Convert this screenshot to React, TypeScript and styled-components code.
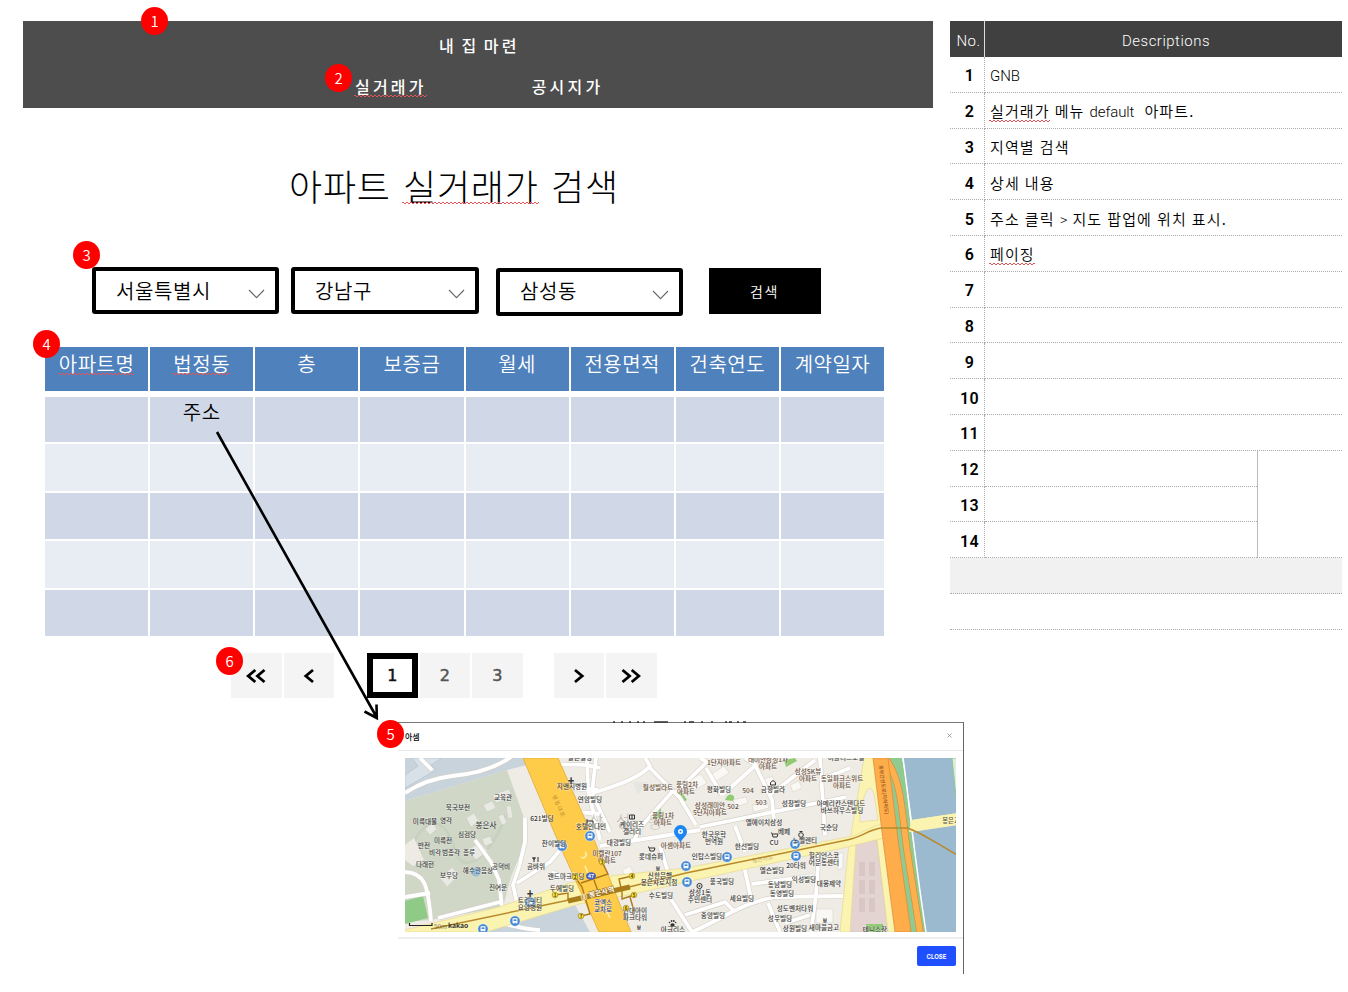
import React from "react";
import styled, { createGlobalStyle, css } from "styled-components";

const KR = `"Noto Sans CJK KR", sans-serif`;
const MIX = `Roboto, "Noto Sans CJK KR", sans-serif`;

const GlobalStyle = createGlobalStyle`
  * { box-sizing: border-box; }
  body { margin: 0; background: #fff; color: #000; font-family: ${KR}; font-weight: 300; }
`;

const Page = styled.div`
  position: relative;
  width: 1348px;
  height: 992px;
  overflow: hidden;
  display: flex;
  gap: 17px;
  padding: 21px 0 0 23px;
`;
const Main = styled.main`
  width: 910px;
  display: flex;
  flex-direction: column;
`;

const Badge = styled.span<{ $x: number; $y: number }>`
  position: absolute;
  left: ${(p) => p.$x}px;
  top: ${(p) => p.$y}px;
  width: 27px;
  height: 28px;
  border-radius: 50%;
  background: #fe0000;
  color: #fff;
  font: 350 15px/28px ${KR};
  letter-spacing: 0;
  text-align: center;
  z-index: 3;
`;

const Spell = styled.span<{ $drop?: number }>`
  position: relative;
  &::after {
    content: "";
    position: absolute;
    left: -1px;
    right: 0;
    bottom: ${(p) => p.$drop ?? 0}px;
    height: 2px;
    background:
      repeating-linear-gradient(90deg, #e0555a 0 2px, transparent 2px 4px) 0 0 / 100% 1px no-repeat,
      repeating-linear-gradient(90deg, transparent 0 2px, #e0555a 2px 4px) 0 1px / 100% 1px no-repeat;
  }
`;

const Header = styled.header`
  position: relative;
  height: 87px;
  background: #4d4d4d;
  color: #fff;
  font-size: 16px;
  font-weight: 500;
  letter-spacing: 3.2px;
`;
const Brand = styled.div`
  padding: 12px 0 0 416px;
  line-height: 24px;
  word-spacing: -2.3px;
`;
const Nav = styled.nav`
  display: flex;
  gap: 105px;
  padding: 17px 0 0 332px;
  line-height: 24px;
`;

const Title = styled.h1`
  margin: 52px 0 0 266px;
  font-size: 36px;
  font-weight: 300;
  line-height: 50px;
  letter-spacing: 0.8px;
  word-spacing: 3.5px;
  white-space: nowrap;
`;

const Filters = styled.div`
  position: relative;
  display: flex;
  align-items: flex-start;
  height: 49px;
  margin: 57px 0 0 69px;
`;
const SelectBox = styled.div<{ $w: number; $h: number; $ml?: number; $mt?: number }>`
  width: ${(p) => p.$w}px;
  height: ${(p) => p.$h}px;
  margin-left: ${(p) => p.$ml ?? 0}px;
  margin-top: ${(p) => p.$mt ?? 0}px;
  border: 4px solid #000;
  border-radius: 3px;
  display: flex;
  align-items: center;
  justify-content: space-between;
  padding: 0 10px ${(p) => (p.$mt ? 3 : 0)}px 20px;
  font-size: 20px;
  font-weight: 350;
  letter-spacing: 0.6px;
  svg { margin-top: ${(p) => (p.$mt ? 9 : 6)}px; }
`;
const SearchButton = styled.button`
  width: 112px;
  height: 46px;
  margin: 1px 0 0 26px;
  padding: 0 1px 0 0;
  border: 0;
  background: #000;
  color: #fff;
  font: 350 14px ${KR};
  letter-spacing: 1.6px;
`;

const Grid = styled.div`
  position: relative;
  width: 839px;
  margin: 31px 0 0 22px;
`;
const GridRow = styled.div<{ $kind: "head" | "odd" | "even"; $first?: boolean }>`
  display: grid;
  grid-template-columns: repeat(8, 1fr);
  gap: 2px;
  text-align: center;
  font-size: 20px;
  font-weight: 350;
  line-height: 30px;
  letter-spacing: 0.5px;
  margin-top: 2px;
  height: ${(p) => (p.$first ? 45 : 46.5)}px;
  > div { background: ${(p) => (p.$kind === "odd" ? "#d0d7e6" : "#e8edf4")}; }
  ${(p) =>
    p.$kind === "head" &&
    css`
      margin: 0 0 6px;
      height: 44px;
      line-height: 34px;
      color: #fff;
      > div { background: #4f81bc; }
    `}
`;

const Pager = styled.div`
  position: relative;
  display: flex;
  margin: 17px 0 0 208px;
`;
const PageButton = styled.div<{ $ml?: number; $current?: boolean }>`
  width: 50.5px;
  height: 45px;
  margin-left: ${(p) => p.$ml ?? 2}px;
  display: flex;
  align-items: center;
  justify-content: center;
  background: ${(p) => (p.$current ? "#fff" : "#f4f4f4")};
  border: ${(p) => (p.$current ? "6px solid #000" : "0")};
  color: ${(p) => (p.$current ? "#111" : "#555")};
  font: 400 16px "DejaVu Sans", sans-serif;
  -webkit-text-stroke: 0.5px currentColor;
`;

const Descriptions = styled.aside`
  width: 392px;
  display: grid;
  grid-template-columns: 35px 272px 1fr;
  grid-template-rows: 36px repeat(16, 35.8px);
  align-self: flex-start;
  font: 350 15px ${KR};
`;
const DescHead = styled.div<{ $wide?: boolean }>`
  background: #404040;
  color: #fff;
  display: flex;
  align-items: center;
  justify-content: center;
  padding-top: 4px;
  font: 300 15px ${MIX};
  letter-spacing: 0.5px;
  ${(p) => (p.$wide ? "grid-column: span 2; padding-left: 5px;" : "border-right: 1px solid #ddd; padding-left: 3px;")}
`;
const NumCell = styled.div`
  display: flex;
  align-items: center;
  justify-content: center;
  padding: 3px 0 0 5px;
  border-right: 1px dotted #aaa;
  border-bottom: 1px dotted #aaa;
  font: 600 16px ${MIX};
  letter-spacing: 0.3px;
`;
const TextCell = styled.div<{ $span: number }>`
  grid-column: span ${(p) => p.$span};
  display: flex;
  align-items: center;
  padding: 1px 0 0 5px;
  border-bottom: 1px dotted #aaa;
  white-space: pre;
  letter-spacing: 1.1px;
  word-spacing: 0.6px;
`;
const Latin = styled.span`
  font-family: Roboto, sans-serif;
  font-weight: 300;
  font-size: 15px;
  letter-spacing: -0.1px;
`;
const SideCell = styled.div`
  grid-column: 3;
  grid-row: 13 / span 3;
  border-left: 1px solid #bbb;
  border-bottom: 1px dotted #aaa;
`;
const FootRow = styled.div<{ $fill?: boolean }>`
  grid-column: 1 / -1;
  background: ${(p) => (p.$fill ? "#f1f1f1" : "#fff")};
  border-bottom: 1px dotted #aaa;
`;

const ArrowLayer = styled.svg`
  position: absolute;
  left: 200px;
  top: 420px;
  z-index: 2;
`;

const Popup = styled.section`
  position: absolute;
  left: 398px;
  top: 722px;
  width: 566px;
  height: 252px;
  background: #fff;
  border-top: 1px solid #777;
  border-right: 1.5px solid #666;
  display: flex;
  flex-direction: column;
`;
const EdgeMarks = styled.svg`
  position: absolute;
  left: 212px;
  top: -2px;
`;
const PopupHead = styled.div`
  height: 28px;
  padding: 0 11px 0 7px;
  display: flex;
  align-items: center;
  justify-content: space-between;
  border-bottom: 1px solid #e6e6e6;
  font-size: 8px;
  font-weight: 500;
  svg { margin-top: -2px; }
`;
const PopupBody = styled.div`
  height: 188px;
  padding: 7px 0 0 7px;
  border-bottom: 2px solid #eee;
  svg { display: block; }
`;
const PopupFoot = styled.div`
  flex: 1;
  display: flex;
  justify-content: flex-end;
  padding: 7px 7px 0 0;
`;
const CloseButton = styled.button`
  width: 39px;
  height: 20px;
  padding: 0;
  border: 0;
  border-radius: 2px;
  background: #1f4fff;
  color: #fff;
  font: 700 6px Inter, sans-serif;
`;

const Chevron = () => (
  <svg width="17" height="10" viewBox="0 0 17 10" fill="none" stroke="#666" strokeWidth="1.1">
    <path d="M1 1 8.5 8.6 16 1" />
  </svg>
);

const Angle = ({ double, right }: { double?: boolean; right?: boolean }) => (
  <svg width="22" height="16" viewBox="0 0 22 16" fill="none" stroke="#000" strokeWidth="2.8" transform={right ? "scale(-1 1)" : undefined}>
    {double ? <path d="M10.3 2 3.2 8l7.1 6M19.5 2l-7.1 6 7.1 6" /> : <path d="M15 2 7.8 8l7.2 6" />}
  </svg>
);

type Label = [string, number, number, string?, number?];
const brown = "#664d38";
const labels: Label[] = [
  ["지앤지병원", 572, 789], ["연암빌딩", 590, 802], ["교육관", 503, 800], ["북국보전", 458, 810],
  ["미륵대불", 425, 824], ["영각", 446, 823], ["봉은사", 486, 828, "#444", 7.6], ["심검당", 467, 837],
  ["621빌딩", 542, 821], ["미륵전", 443, 843], ["찬이빌딩", 554, 846], ["호텔인나인", 591, 829],
  ["케이리즈", 632, 827], ["갤러리", 632, 834], ["월성빌라트", 658, 790, brown], ["풍림2차", 687, 787, brown],
  ["아파트", 686, 794, brown], ["평화빌딩", 719, 792], ["504", 748, 793, brown], ["금향빌라", 773, 792],
  ["1단지아파트", 724, 765, brown], ["래미안삼성1차", 768, 762, brown], ["아파트", 768, 769, brown],
  ["삼성SK뷰", 808, 774, brown], ["아파트", 808, 781, brown], ["동일파크스위트", 842, 781, brown],
  ["아파트", 842, 788, brown], ["비즐리스포텔", 846, 760], ["알은빌딩", 580, 760], ["삼성래미안", 710, 808, brown],
  ["5단지아파트", 710, 815, brown], ["502", 733, 809, brown], ["503", 761, 805, brown], ["성창빌딩", 794, 806],
  ["아메리칸스탠다드", 841, 806], ["바쓰하우스빌딩", 842, 813], ["국순당", 829, 830], ["엘에이치삼성", 764, 825],
  ["풍림1차", 663, 818, brown], ["아파트", 663, 825, brown], ["아셈아파트", 676, 848, brown],
  ["한국문학", 714, 837], ["번역원", 714, 844], ["대광빌딩", 619, 845], ["베페", 784, 834], ["CU", 774, 845],
  ["노벨렌티", 805, 843], ["한선빌딩", 747, 849], ["인탑스빌딩", 707, 859], ["20타워", 796, 868],
  ["힐리언스코", 824, 858], ["어운동센터", 824, 865], ["엘슨빌딩", 772, 873], ["익성빌딩", 804, 882],
  ["동남빌딩", 780, 887], ["동영빌딩", 782, 896], ["대웅제약", 829, 886], ["풍국빌딩", 722, 884],
  ["삼성1동", 700, 895], ["주민센터", 700, 902], ["세요빌딩", 742, 901], ["중앙빌딩", 713, 918],
  ["성도벤처타워", 795, 911], ["성우빌딩", 780, 921], ["상원빌딩", 795, 931], ["새마을금고", 824, 930],
  ["테니스장", 875, 932], ["반전", 424, 848], ["비각", 435, 855], ["범종각", 451, 855], ["종루", 469, 855],
  ["다래헌", 425, 867], ["보우당", 449, 878], ["해수관음상", 478, 873], ["공덕비", 501, 869], ["진여문", 498, 890],
  ["곰바위", 536, 869], ["랜드마크빌딩", 566, 879], ["두에빌딩", 562, 891], ["트리니티", 530, 903], ["요양병원", 530, 910],
  ["미켈란107", 607, 856, brown], ["아파트", 607, 863, brown], ["코엑스", 603, 905, "#2c3f8c"], ["교차로", 603, 911.5, "#2c3f8c"],
  ["현대아이", 635, 913], ["파크타워", 635, 920], ["아크리스", 673, 932], ["수도빌딩", 661, 898], ["롯데슈퍼", 651, 859],
  ["신한은행", 660, 878], ["봉은사로지점", 659, 885], ["₩", 658, 871], ["₩", 639, 930],
  ["₩", 825, 923], ["✚", 571, 783], ["✚", 530, 896],
];
const busStops = [[590, 836], [562, 846], [795, 844], [796, 856], [727, 857], [686, 866], [687, 882], [530, 902], [515, 921], [483, 929]];
const exits: [number, number, string][] = [[602, 862, "3"], [575, 877, "2"], [555, 895, "1"], [632, 876, "4"], [634, 895, "5"], [626, 908, "6"], [581, 916, "7"]];

const WHITE_ROADS = [
  "M405 793C420 783 435 778 452 776C475 774 495 768 511 757",
  "M405 872C424 873 428 883 431 921",
  "M475 840 491 862 499 880 502 907M405 897 430 893M438 918 500 902",
  "M525 818V842L519 867 513 885 517 903M517 883 550 862 560 850",
  "M557 764C575 766 580 762 600 768M566 788 598 790M587 758 588 790 600 840M578 812 600 814",
  "M592 793C610 788 640 778 650 766L645 758M650 768 680 798 696 825M672 792 638 830M640 822 635 840",
  "M592 793 596 758M592 793 610 832M676 792 707 762 700 758M706 768 722 795M722 795 756 765 745 758M756 767 772 800 774 820",
  "M700 827 846 797M770 795 815 760M820 758 825 835M820 780 850 768",
  "M600 846 700 830M660 846 668 872M735 826 745 852",
  "M606 890 625 932M667 893 692 932M692 932C730 915 740 904 775 897L843 896M685 915 725 902 735 912",
  "M744 866 752 903M752 884 812 876M819 850 816 895 811 932M768 903 780 932M785 923 810 915",
  "M552 872 569 880M420 758 432 770M476 920C490 918 520 930 540 930",
];

const MapView = () => (
  <svg width="551" height="174" viewBox="405 758 551 174" fontFamily='"Noto Sans CJK KR", sans-serif'>
    <rect x="405" y="758" width="551" height="174" fill="#efece6" />
    <path d="M405 758H527V765L507 770 405 801Z" fill="#c8d3dc" />
    <path d="M405 775 418 766 412 758H442L431 765 436 770 405 788Z" fill="#d8e0e8" stroke="#b4c0cc" strokeWidth=".6" />
    <path d="M405 801 507 770 523 815 524 845 511 877 503 907 430 920 405 922Z" fill="#d0d7c7" />
    <path d="M410 850C425 815 445 815 455 850S500 840 505 815" fill="none" stroke="#c8d0bf" strokeWidth="3" />
    <path d="M405 901 423 896 428 918 405 924Z" fill="#8fcb87" />
    <path d="M486 932 575 905 590 932Z" fill="#c8d3dc" />
    <path d="M405 845 414 838 424 860 413 866 405 860Z" fill="#eeeae4" />
    <g fill="#e9e9e4" stroke="#c5c8bf" strokeWidth=".5">
      <path d="m466 818 8-5 5 8-8 6ZM483 805l9-4 4 7-9 4ZM493 795l16-6 3 8-16 6ZM440 878l12-11 7 8-12 12ZM468 850l12-8 8 9-12 9ZM506 806h5l2 12h-5ZM498 816l5-2 4 9-5 2ZM425 829l7-6 5 6-7 6ZM482 839l8-3 3 7-8 3Z" />
    </g>
    <path d="m633 782 15 0-10 13ZM690 775l12 6-8 10Z" fill="#e6e6e0" />
    <path d="M675 793 681 791 687 800 681 803ZM654 812 661 805V818H651ZM726 798C730 791 737 796 733 801L725 800ZM784 760 795 758 797 761 786 767Z" fill="#8fcb72" />
    <g fill="#faf8f5" stroke="#d2cdc5" strokeWidth=".5">
      <path d="m686 781 15-7 6 9-14 8ZM710 775l14-9 5 7-14 9ZM733 800l13-3 2 6-13 4ZM752 805l15-3 2 6-15 4ZM762 780l10-4 4 7-10 4ZM790 785l9-4 3 7-9 4ZM816 909h17v14h-17ZM837 855l6-3v16l-5 2ZM622 870l8-4 4 8-8 3Z" />
    </g>
    <g fill="none" strokeLinejoin="round">
      {WHITE_ROADS.map((d) => <path key={`c${d}`} d={d} stroke="#d5d0c8" strokeWidth="5" />)}
      {WHITE_ROADS.map((d) => <path key={d} d={d} stroke="#fff" strokeWidth="3.8" />)}
    </g>
    <path d="M853 843 877 840 888 932H847Z" fill="#e3d4d2" stroke="#ccb8b6" strokeWidth=".6" />
    <path d="M859 862h6v14h-6ZM869 862h6v14h-6ZM859 880h6v14h-6ZM869 880h6v14h-6ZM859 898h6v14h-6ZM869 898h6v14h-6Z" fill="#d9c7c6" />
    <rect x="866" y="924" width="17" height="9" fill="#8fcb72" />
    <g fill="#fbf3b0" stroke="#e6da94" strokeWidth=".7">
      <path d="M864 758H874L896 932H888L877 840 863 835 856 843 850 932H840L848 852 857 800Z" />
      <path d="M405 930 499 907 569 883 609 876 686 868 853 836 880 824 957 813V825L908 832 843 848 686 882 629 895 579 904 486 932H405Z" />
    </g>
    <path d="M867 790C862 800 859 815 860 822L878 820 874 794Q871 785 867 790Z" fill="#f1ede6" stroke="#e6da94" strokeWidth=".7" />
    <path d="M903 758H952L957 805V813L912 820Z" fill="#9bb9cf" />
    <path d="M912 832 957 825V932H926Z" fill="#9bb9cf" />
    <path d="M952 758 957 806V758Z" fill="#dfeedd" stroke="#8cc98e" />
    <path d="M886 758H902C907 785 909 810 912 835L926 932H909L897 846Z" fill="#91ca91" />
    <path d="M903 758C909 800 914 855 926 932" fill="none" stroke="#fff" strokeWidth="1.5" />
    <path d="M885 758C902 780 902 815 907 850L920 932" fill="none" stroke="#d88a35" strokeWidth="7" />
    <path d="M885 758C902 780 902 815 907 850L920 932" fill="none" stroke="#fdb04e" strokeWidth="5.8" />
    <path d="M873 758H888L898 840 911 932H895L883 840Z" fill="#ffad4a" stroke="#d88a35" strokeWidth=".7" />
    <path d="M911 820 957 813V825L909 832Z" fill="#fbf3b0" />
    <path d="M523 758H558L595 842 631 932H599L560 846Z" fill="#ffcc49" stroke="#dfaa35" strokeWidth=".8" />
    <path d="m585 866 5 13M601 899l9 19M585 852a3 3 0 0 1-4 5" fill="none" stroke="#fff0b0" strokeWidth="1.5" />
    <path d="M431 929 569 900 629 887 686 873 847 840C863 837 867 830 881 828H907C918 831 928 838 957 855" fill="none" stroke="#b8892b" strokeWidth="1.5" />
    <path d="m568 901 62-14" stroke="#a77c1b" strokeWidth="5" />
    <path d="M568 900V893L555 895M581 883 608 874 602 862M575 877 582 887 590 914 581 916M594 880 599 894M621 888 619 879 632 876M622 889V899L634 895M630 897 634 911" fill="none" stroke="#ae7a17" strokeWidth="1.4" />
    <g textAnchor="middle">
      <text x="596" y="827" fontSize="16" fill="#b0aba5" opacity=".8">삼</text>
      <text x="623" y="827" fontSize="16" fill="#b0aba5" opacity=".8">성</text>
      <text x="655" y="828" fontSize="16" fill="#b0aba5" opacity=".5">동</text>
      <text fontSize="5.5" fill="#94712d" transform="translate(557 807) rotate(66)" letterSpacing="1">영동대로</text>
      <text fontSize="5.8" fill="#a78c43" transform="translate(763 861) rotate(-11)">봉은사로</text>
      <text fontSize="5" fontWeight="500" fill="#8c501b" transform="translate(882 790) rotate(83)">동부간선도로(지하차도)</text>
      <text x="602" y="894.5" fontSize="7" fontWeight="700" fill="#fff" stroke="#8c6410" strokeWidth="1" paintOrder="stroke" transform="rotate(-13 602 894)">봉은사역</text>
      <text x="951" y="823" fontSize="6.3" fontWeight="500" fill="#555">봉은교</text>
    </g>
    <g fill="#4589d6" stroke="#fff" strokeWidth=".5">
      {busStops.map(([x, y]) => (
        <g key={`${x}-${y}`}>
          <circle cx={x} cy={y} r="5.2" />
          <path d={`M${x - 2.2} ${y - 2.5}h4.4v4.3h-4.4Z`} fill="#fff" />
          <path d={`M${x - 1.5} ${y - 1.6}h3v1.6h-3Z`} stroke="none" />
          <path d={`M${x - 1.7} ${y + 1.8}v1M${x + 1.7} ${y + 1.8}v1`} />
        </g>
      ))}
    </g>
    <g textAnchor="middle" fontWeight="500" stroke="#fff" strokeOpacity=".5" strokeWidth=".9" paintOrder="stroke">
      {labels.map(([t, x, y, c, s]) => (
        <text key={`${t}${x}${y}`} x={x} y={y} fill={c ?? "#383838"} fontSize={s ?? 6.6}>{t}</text>
      ))}
    </g>
    <g textAnchor="middle" fontSize="4.4" fontWeight="700">
      {exits.map(([x, y, n]) => (
        <g key={n}>
          <circle cx={x} cy={y} r="2.8" fill="#f9df38" stroke="#8f771d" strokeWidth=".6" />
          <text x={x} y={y + 1.6} fill="#443500">{n}</text>
        </g>
      ))}
      <ellipse cx="591" cy="876" rx="5" ry="3.8" fill="#4562b8" />
      <text x="591" y="878" fill="#fff" fontSize="5">47</text>
      <circle cx="584" cy="897" r="3" fill="#c49a2c" stroke="#fff" strokeWidth=".6" />
      <text x="584" y="898.6" fill="#fff">9</text>
    </g>
    <circle cx="476" cy="872" r="4.5" fill="#5b9ad5" opacity=".45" />
    <g fill="none" stroke="#333" strokeWidth="1">
      <circle cx="699.5" cy="886" r="2.6" /><circle cx="699.5" cy="886" r=".6" />
      <circle cx="801" cy="835" r="2.3" /><path d="M799.5 831.5h3" />
      <path d="M629.5 815h5v4h-5ZM632 815v4M587 819v4M587 821h6v2M648 847h1l1 4h4l1-3h-5M771 833h1l1 4h4l1-3h-5M534 857v5M538 857v5M533 857v2h2v-2M770.5 785v-2.5l2.5-2 2.5 2v2.5Z" />
    </g>
    <g fill="#333">
      <ellipse cx="672.5" cy="925" rx="2.2" ry="1.7" /><circle cx="669.5" cy="922.5" r=".8" /><circle cx="671.6" cy="921" r=".9" /><circle cx="673.8" cy="921" r=".9" /><circle cx="675.6" cy="922.5" r=".8" />
    </g>
    <path d="M680.5 843C679 838 674 836.5 674 831.5A6.5 6.5 0 0 1 687 831.5C687 836.5 682 838 680.5 843Z" fill="#1c86f2" />
    <circle cx="680.5" cy="831.5" r="2.5" fill="#fff" />
    <circle cx="680.5" cy="831.5" r="1" fill="#1c86f2" />
    <path d="M409.5 923v2.5H432V923" fill="none" stroke="#222" strokeWidth="1.2" />
    <text x="434" y="928.5" fontSize="6.5" fill="#333">50m</text>
    <text x="448" y="928" fontSize="6.8" fontWeight="700" fill="#333">kakao</text>
  </svg>
);

const columns = ["아파트명", "법정동", "층", "보증금", "월세", "전용면적", "건축연도", "계약일자"];
const notes: React.ReactNode[] = [
  <Latin>GNB</Latin>,
  <><Spell $drop={-1}>실거래가</Spell> 메뉴 <Latin>default</Latin>{"  "}아파트.</>,
  "지역별 검색",
  "상세 내용",
  <>주소 클릭 <Latin>&gt;</Latin> 지도 팝업에 위치 표시.</>,
  <Spell $drop={-1}>페이징</Spell>,
];

export default function App() {
  return (
    <Page>
      <GlobalStyle />
      <Main>
        <Header>
          <Badge $x={118} $y={-14}>1</Badge>
          <Badge $x={302} $y={43}>2</Badge>
          <Brand>내 집 마련</Brand>
          <Nav>
            <Spell $drop={1}>실거래가</Spell>
            <span>공시지가</span>
          </Nav>
        </Header>
        <Title>아파트 <Spell $drop={7}>실거래가</Spell> 검색</Title>
        <Filters>
          <Badge $x={-19} $y={-26}>3</Badge>
          <SelectBox $w={187} $h={47}>서울특별시<Chevron /></SelectBox>
          <SelectBox $w={188} $h={47} $ml={12}>강남구<Chevron /></SelectBox>
          <SelectBox $w={187} $h={48} $ml={17} $mt={1}>삼성동<Chevron /></SelectBox>
          <SearchButton>검색</SearchButton>
        </Filters>
        <Grid>
          <Badge $x={-12} $y={-17}>4</Badge>
          <GridRow $kind="head">
            {columns.map((c, i) => <div key={c}>{i < 2 ? <Spell $drop={3}>{c}</Spell> : c}</div>)}
          </GridRow>
          {[0, 1, 2, 3, 4].map((r) => (
            <GridRow key={r} $kind={r % 2 ? "even" : "odd"} $first={r === 0}>
              {columns.map((c, i) => <div key={c}>{r === 0 && i === 1 ? "주소" : null}</div>)}
            </GridRow>
          ))}
        </Grid>
        <Pager>
          <Badge $x={-15} $y={-6}>6</Badge>
          <PageButton $ml={0}><Angle double /></PageButton>
          <PageButton><Angle /></PageButton>
          <PageButton $ml={33} $current>1</PageButton>
          <PageButton>2</PageButton>
          <PageButton>3</PageButton>
          <PageButton $ml={31}><Angle right /></PageButton>
          <PageButton><Angle double right /></PageButton>
        </Pager>
      </Main>

      <Descriptions>
        <DescHead>No.</DescHead>
        <DescHead $wide>Descriptions</DescHead>
        {Array.from({ length: 14 }, (_, i) => (
          <React.Fragment key={i}>
            <NumCell>{i + 1}</NumCell>
            <TextCell $span={i < 11 ? 2 : 1}><span>{notes[i]}</span></TextCell>
          </React.Fragment>
        ))}
        <SideCell />
        <FootRow $fill />
        <FootRow />
      </Descriptions>

      <ArrowLayer width="200" height="310" viewBox="200 420 200 310" fill="none" stroke="#000" strokeWidth="2.6">
        <path d="M217 432 376.5 717M364.5 711.5 376.8 718 376.5 704.5" />
      </ArrowLayer>

      <Popup>
        <Badge $x={-21} $y={-3}>5</Badge>
        <EdgeMarks width="142" height="3" viewBox="0 0 142 3" stroke="#333" strokeWidth="1.4">
          <path d="M3 1h2M11 1h2M19 1h2M27 1h2M33 1h2M44 1h14M74 1h2M79 1h5M91 1h2M101 1h2M115 1h2M119 1h3M127 1h2M133 1h3" />
        </EdgeMarks>
        <PopupHead>
          <span>아셈</span>
          <svg width="5" height="5" viewBox="0 0 5 5" stroke="#888" strokeWidth=".8"><path d="m.5.5 4 4M4.5.5l-4 4" /></svg>
        </PopupHead>
        <PopupBody><MapView /></PopupBody>
        <PopupFoot><CloseButton>CLOSE</CloseButton></PopupFoot>
      </Popup>
    </Page>
  );
}
